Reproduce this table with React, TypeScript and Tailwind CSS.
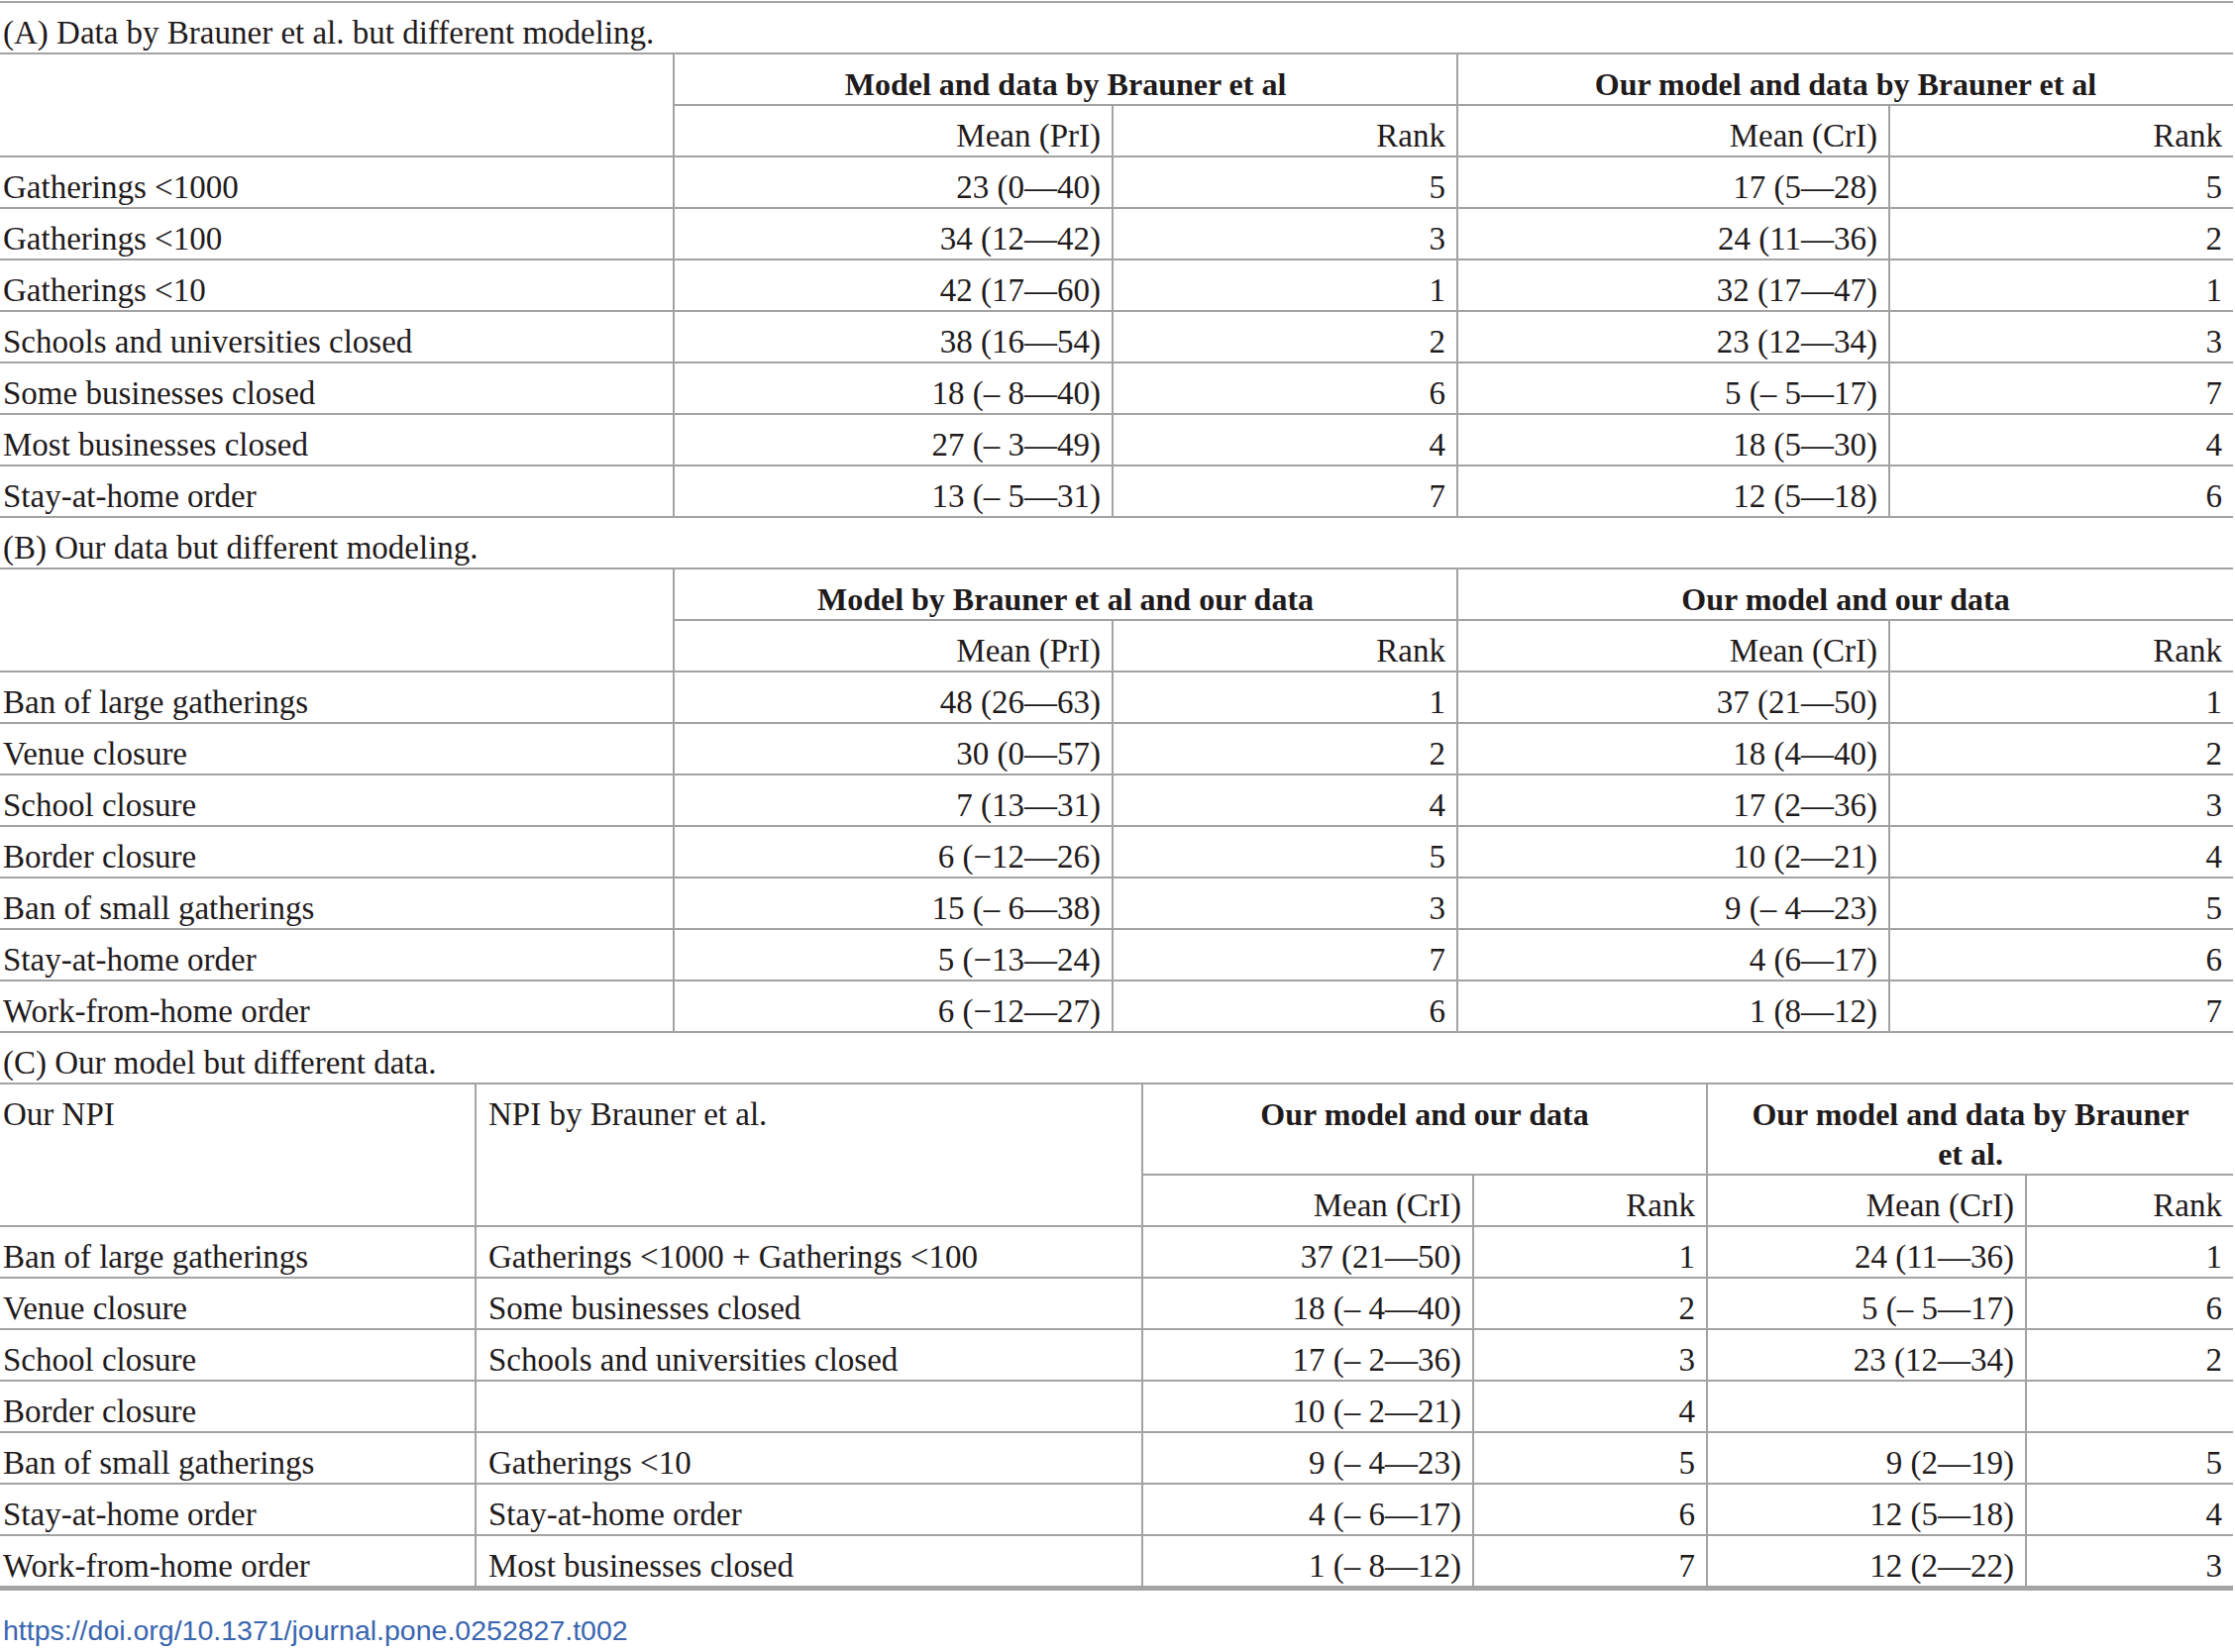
const line = "border-[#a3a3a3]";
const cell = `h-[52px] border-b-2 ${line} pt-[10px] leading-[40px] whitespace-nowrap`;
const numCell = `${cell} border-l-2 pr-[11px] text-right`;
const groupCell = `border-b-2 border-l-2 ${line} pt-[10px] leading-[40px] text-center font-bold text-[32px]`;

type Section = {
  label: string;
  groups: string[];
  sub: string[];
  rows: string[][];
};

const sectionA: Section = {
  label: "(A) Data by Brauner et al. but different modeling.",
  groups: ["Model and data by Brauner et al", "Our model and data by Brauner et al"],
  sub: ["Mean (PrI)", "Rank", "Mean (CrI)", "Rank"],
  rows: [
    ["Gatherings <1000", "23 (0—40)", "5", "17 (5—28)", "5"],
    ["Gatherings <100", "34 (12—42)", "3", "24 (11—36)", "2"],
    ["Gatherings <10", "42 (17—60)", "1", "32 (17—47)", "1"],
    ["Schools and universities closed", "38 (16—54)", "2", "23 (12—34)", "3"],
    ["Some businesses closed", "18 (– 8—40)", "6", "5 (– 5—17)", "7"],
    ["Most businesses closed", "27 (– 3—49)", "4", "18 (5—30)", "4"],
    ["Stay-at-home order", "13 (– 5—31)", "7", "12 (5—18)", "6"],
  ],
};

const sectionB: Section = {
  label: "(B) Our data but different modeling.",
  groups: ["Model by Brauner et al and our data", "Our model and our data"],
  sub: ["Mean (PrI)", "Rank", "Mean (CrI)", "Rank"],
  rows: [
    ["Ban of large gatherings", "48 (26—63)", "1", "37 (21—50)", "1"],
    ["Venue closure", "30 (0—57)", "2", "18 (4—40)", "2"],
    ["School closure", "7 (13—31)", "4", "17 (2—36)", "3"],
    ["Border closure", "6 (−12—26)", "5", "10 (2—21)", "4"],
    ["Ban of small gatherings", "15 (– 6—38)", "3", "9 (– 4—23)", "5"],
    ["Stay-at-home order", "5 (−13—24)", "7", "4 (6—17)", "6"],
    ["Work-from-home order", "6 (−12—27)", "6", "1 (8—12)", "7"],
  ],
};

const sectionC: Section = {
  label: "(C) Our model but different data.",
  groups: ["Our model and our data", "Our model and data by Brauner et al."],
  sub: ["Mean (CrI)", "Rank", "Mean (CrI)", "Rank"],
  rows: [
    ["Ban of large gatherings", "Gatherings <1000 + Gatherings <100", "37 (21—50)", "1", "24 (11—36)", "1"],
    ["Venue closure", "Some businesses closed", "18 (– 4—40)", "2", "5 (– 5—17)", "6"],
    ["School closure", "Schools and universities closed", "17 (– 2—36)", "3", "23 (12—34)", "2"],
    ["Border closure", "", "10 (– 2—21)", "4", "", ""],
    ["Ban of small gatherings", "Gatherings <10", "9 (– 4—23)", "5", "9 (2—19)", "5"],
    ["Stay-at-home order", "Stay-at-home order", "4 (– 6—17)", "6", "12 (5—18)", "4"],
    ["Work-from-home order", "Most businesses closed", "1 (– 8—12)", "7", "12 (2—22)", "3"],
  ],
};

function SplitSection({ data }: { data: Section }) {
  return (
    <div className="grid grid-cols-[679px_443px_348px_436px_1fr]">
      <div className={`col-span-5 ${cell} pl-[3px]`}>{data.label}</div>
      <div className={`row-span-2 border-b-2 ${line}`} />
      {data.groups.map((g) => (
        <div key={g} className={`col-span-2 h-[52px] px-[12px] ${groupCell}`}>
          {g}
        </div>
      ))}
      {data.sub.map((s, i) => (
        <div key={i} className={numCell}>
          {s}
        </div>
      ))}
      {data.rows.map((row) =>
        row.map((v, j) => (
          <div key={row[0] + j} className={j === 0 ? `${cell} pl-[3px]` : numCell}>
            {v}
          </div>
        ))
      )}
    </div>
  );
}

function DataSection({ data }: { data: Section }) {
  return (
    <div className="grid grid-cols-[479px_673px_334px_236px_322px_1fr]">
      <div className={`col-span-6 ${cell} pl-[3px]`}>{data.label}</div>
      <div className={`row-span-2 border-b-2 ${line} pt-[10px] leading-[40px] pl-[3px]`}>Our NPI</div>
      <div className={`row-span-2 border-b-2 border-l-2 ${line} pt-[10px] leading-[40px] pl-[12px]`}>
        NPI by Brauner et al.
      </div>
      <div className={`col-span-2 h-[92px] px-[12px] ${groupCell}`}>{data.groups[0]}</div>
      <div className={`col-span-2 h-[92px] px-[36px] ${groupCell}`}>{data.groups[1]}</div>
      {data.sub.map((s, i) => (
        <div key={i} className={numCell}>
          {s}
        </div>
      ))}
      {data.rows.map((row) =>
        row.map((v, j) => (
          <div
            key={row[0] + j}
            className={
              j === 0 ? `${cell} pl-[3px]` : j === 1 ? `${cell} border-l-2 pl-[12px]` : numCell
            }
          >
            {v}
          </div>
        ))
      )}
    </div>
  );
}

export default function App() {
  return (
    <div className="min-h-screen bg-white pt-px">
      <div
        className={`w-[2254px] border-t-2 border-b-[3px] ${line} font-['Liberation_Serif','Times_New_Roman',serif] text-[33px] text-[#1f1b1c]`}
      >
        <SplitSection data={sectionA} />
        <SplitSection data={sectionB} />
        <DataSection data={sectionC} />
      </div>
      <a
        href="#"
        className="mt-[22px] block pl-[3px] font-['Liberation_Sans',Arial,sans-serif] text-[28.5px] leading-[36px] text-[#3a66b0]"
      >
        https://doi.org/10.1371/journal.pone.0252827.t002
      </a>
    </div>
  );
}
